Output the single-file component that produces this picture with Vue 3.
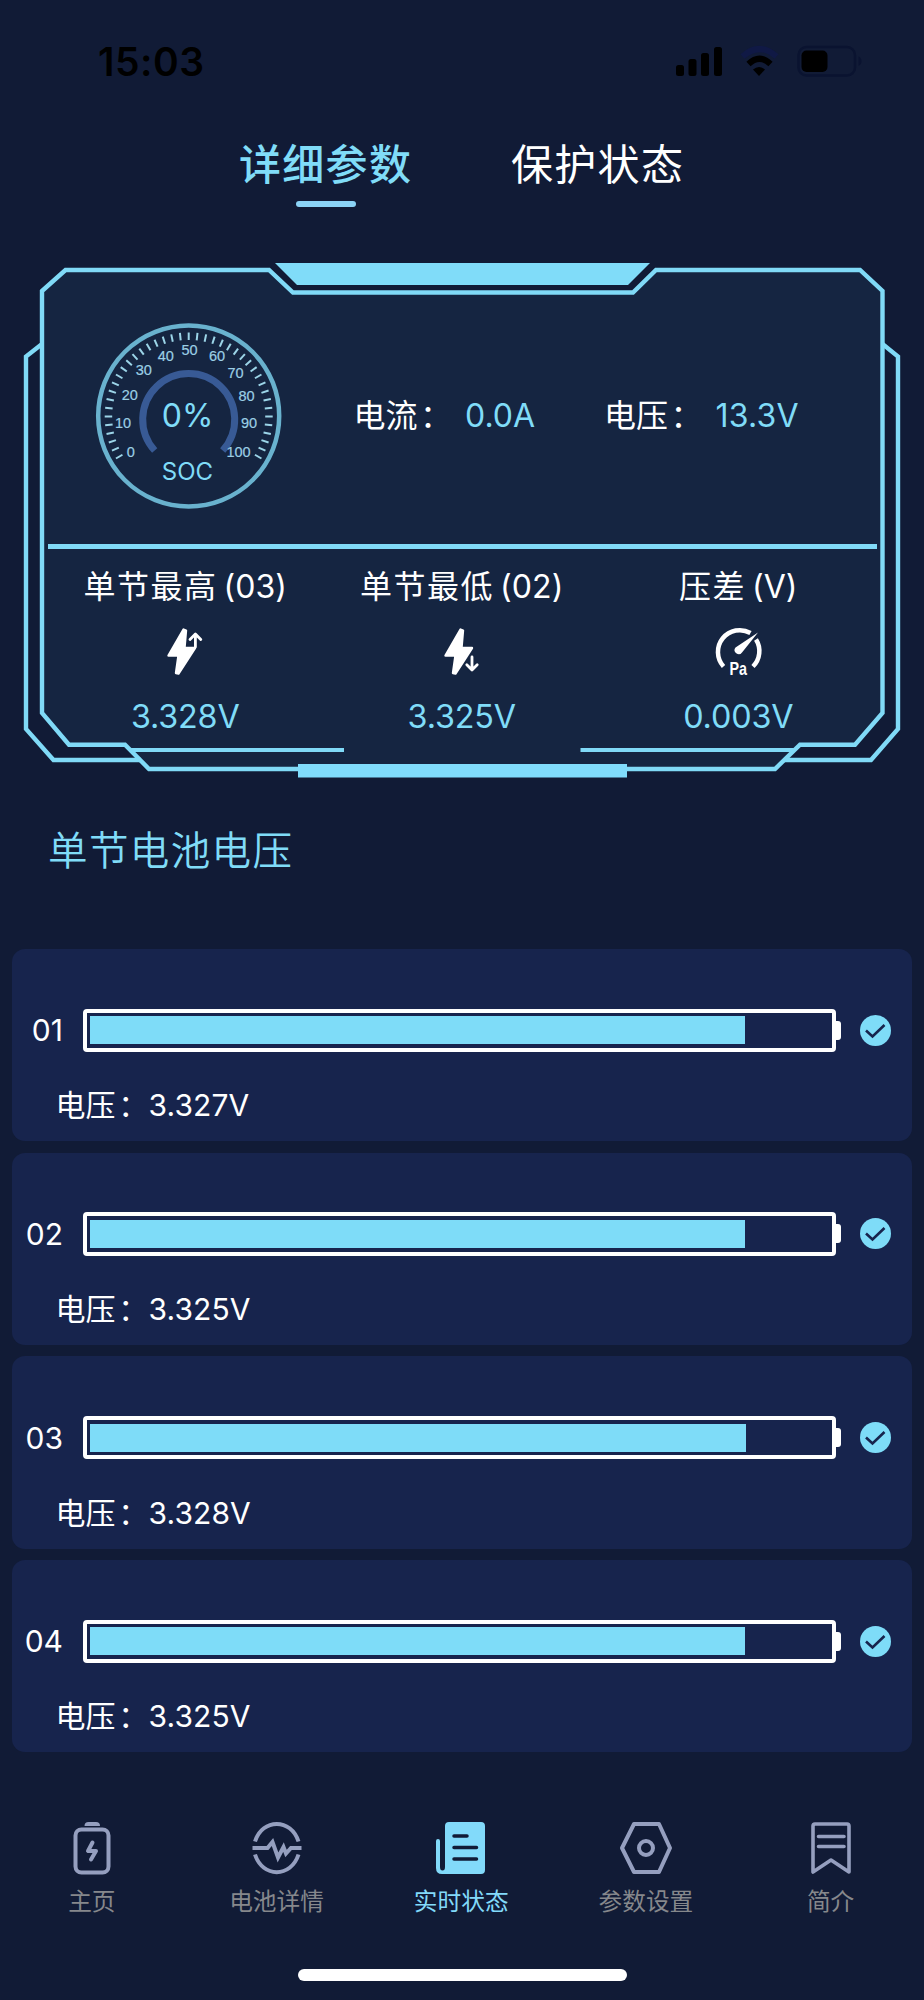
<script setup>
const ticks = Array.from({ length: 41 }, (_, i) => -120 + i * 6)

const scale = [
  { v: 0, x: 130.7, y: 452 },
  { v: 10, x: 123, y: 423 },
  { v: 20, x: 129.7, y: 394.5 },
  { v: 30, x: 143.7, y: 369.7 },
  { v: 40, x: 165.7, y: 355.7 },
  { v: 50, x: 189.5, y: 350 },
  { v: 60, x: 217, y: 356 },
  { v: 70, x: 235.5, y: 373 },
  { v: 80, x: 246.5, y: 396 },
  { v: 90, x: 249, y: 423 },
  { v: 100, x: 238.5, y: 452 }
]

const cells = [
  { id: '01', voltage: '3.327V', level: 88.7 },
  { id: '02', voltage: '3.325V', level: 88.7 },
  { id: '03', voltage: '3.328V', level: 88.8 },
  { id: '04', voltage: '3.325V', level: 88.7 }
]
</script>

<template>
  <div class="page">
    <header class="status">
      <span class="clock">15:03</span>
      <svg class="signals" width="190" height="40" viewBox="672 42 190 40">
        <g fill="#000">
          <rect x="676" y="65" width="8" height="11" rx="2.500" />
          <rect x="688.500" y="59" width="8" height="17" rx="2.500" />
          <rect x="701" y="53" width="8" height="23" rx="2.500" />
          <rect x="714" y="47" width="8" height="29" rx="2.500" />
          <path d="M759 76 L753 69.500 Q759 64.500 765 69.500 Z" />
        </g>
        <path d="M748.500 64 Q759.500 53.500 770.500 64" fill="none" stroke="#000" stroke-width="6" />
        <path d="M742.500 56.500 Q759.500 41.500 776.500 56.500" fill="none" stroke="#101945" stroke-width="6" />
        <rect x="798.500" y="47" width="56.500" height="28.500" rx="8" fill="none" stroke="#0a1330" stroke-width="2.500" />
        <rect x="801.500" y="50.500" width="26" height="21.500" rx="5" fill="#000" />
        <path d="M858.500 56.500 q3 1.500 3 4.700 q0 3.200 -3 4.700 z" fill="#0a1330" />
      </svg>
    </header>

    <nav class="tabs">
      <div class="tab active">详细参数</div>
      <div class="tab">保护状态</div>
    </nav>

    <section class="panel">
      <svg class="frame" width="924" height="530" viewBox="0 255 924 530">
        <path d="M42 291 L65.500 270 H269 L293 292.500 H633 L656 270 H860 L882.500 291 V713 L855 744.700 H800 L775 769 H149 L125 744.700 H69 L42 713 Z" fill="#152541" />
        <g fill="none" stroke="#80daf7" stroke-width="4.400">
          <path d="M42 291 L65.500 270 H269 L293 292.500 H633 L656 270 H860 L882.500 291 V713 L855 744.700 H800 L775 769 H149 L125 744.700 H69 L42 713 Z" />
          <path d="M42 344 L26 356.500 V729 L53.500 760 H141" />
          <path d="M882.500 344 L898 356.500 V729 L871 760 H784" />
          <path d="M131 750 H344 M580.500 750 H794" stroke-width="4" />
        </g>
        <path d="M275 263 H650 L628 285 H297 Z" fill="#80dcf9" />
        <rect x="298" y="764" width="329" height="13.500" fill="#80dcfc" />
        <rect x="48" y="544" width="829" height="5" fill="#80daf7" />

        <circle cx="188.700" cy="416" r="90.500" fill="none" stroke="#69b2ce" stroke-width="4.500" />
        <g stroke="#9cd5e8" stroke-width="2">
          <line v-for="a in ticks" :key="a" x1="188.700" x2="188.700" y1="332.500" y2="340" :transform="`rotate(${a} 188.7 416.500)`" />
        </g>
        <path d="M154.700 450.500 A46 46 0 1 1 222.700 450.500" fill="none" stroke="#385a95" stroke-width="7" />
        <g class="scale">
          <text v-for="s in scale" :key="s.v" :x="s.x" :y="s.y + 5">{{ s.v }}</text>
        </g>
        <text class="soc-value" x="187.500" y="427">0%</text>
        <text class="soc-name" x="187.500" y="480">SOC</text>
      </svg>

      <div class="readings">
        <span class="label current">电流<i>：</i></span><span class="value amp">0.0A</span>
        <span class="label total">电压<i>：</i></span><span class="value volt">13.3V</span>
      </div>

      <div class="stats">
        <div class="stat">
          <div class="stat-name">单节最高<span>(03)</span></div>
          <svg width="52" height="52" viewBox="0 0 52 52">
            <path d="M24.500 3.500 L27 4.500 L25.500 22 H36 L19.500 47.500 L17 47 L19.500 29.500 H9.500 Z" fill="#fff" stroke="#fff" stroke-width="2.400" stroke-linejoin="round" />
            <path d="M36.400 21 V9 M31 13.500 L36.400 8 L41.800 13.500" fill="none" stroke="#fff" stroke-width="2.800" stroke-linecap="round" stroke-linejoin="round" />
          </svg>
          <div class="stat-value">3.328V</div>
        </div>
        <div class="stat">
          <div class="stat-name">单节最低<span>(02)</span></div>
          <svg width="52" height="52" viewBox="0 0 52 52">
            <path d="M24.500 3.500 L27 4.500 L25.500 22 H36 L19.500 47.500 L17 47 L19.500 29.500 H9.500 Z" fill="#fff" stroke="#fff" stroke-width="2.400" stroke-linejoin="round" />
            <path d="M36 31 V44 M30.800 38.800 L36 44 L41.200 38.800" fill="none" stroke="#152541" stroke-width="6" />
            <path d="M36 31 V44 M30.800 38.800 L36 44 L41.200 38.800" fill="none" stroke="#fff" stroke-width="2.800" stroke-linecap="round" stroke-linejoin="round" />
          </svg>
          <div class="stat-value">3.325V</div>
        </div>
        <div class="stat">
          <div class="stat-name">压差<span>(V)</span></div>
          <svg width="52" height="52" viewBox="0 0 52 52">
            <path d="M11.500 40.500 A21.800 21.800 0 0 1 38.500 7 M44 13.500 A21.800 21.800 0 0 1 41 40.500" fill="none" stroke="#fff" stroke-width="4.500" />
            <path d="M46 6.500 L30 26.500 A4 4 0 1 1 23.500 21.500 Z" fill="#fff" />
            <text class="pa" x="26.300" y="48.500" textLength="17.500" lengthAdjust="spacingAndGlyphs">Pa</text>
          </svg>
          <div class="stat-value">0.003V</div>
        </div>
      </div>
    </section>

    <h2 class="title">单节电池电压</h2>

    <main class="cells">
      <article v-for="c in cells" :key="c.id" class="cell">
        <div class="row">
          <span class="id">{{ c.id }}</span>
          <div class="battery"><div class="fill" :style="{ width: c.level + '%' }"></div></div>
          <i class="nub"></i>
          <svg class="check" width="31" height="31" viewBox="0 0 31 31">
            <circle cx="15.500" cy="15.500" r="15.500" fill="#7edcf8" />
            <path d="M6 15.500 L12.500 21.500 L24.500 10" fill="none" stroke="#17244d" stroke-width="2.600" />
          </svg>
        </div>
        <div class="detail"><span class="dlabel">电压<i>：</i></span><span>{{ c.voltage }}</span></div>
      </article>
    </main>

    <footer class="bar">
      <div class="item">
        <svg width="54" height="54" viewBox="0 0 54 54" fill="none" stroke="#959fbf" stroke-width="4">
          <path d="M19.500 5 q0 -4 4 -4 h7.500 q4 0 4 4 z" fill="#959fbf" stroke="none" />
          <rect x="10.500" y="8.500" width="33" height="43" rx="6" />
          <path d="M27.500 21.500 L23 30 H31 L26 38.500" stroke-linecap="round" stroke-linejoin="round" />
        </svg>
        <span>主页</span>
      </div>
      <div class="item">
        <svg width="54" height="54" viewBox="0 0 54 54" fill="none" stroke="#959fbf" stroke-width="4">
          <path d="M5 20.500 C12.500 -3 41 -3 48.500 20.500 M5 33.500 C12.500 57 41 57 48.500 33.500" />
          <path d="M2.500 27 H17.500 L22.500 21 L28 36.500 L33.500 26 L36 32.500 L41 27 H51.500" />
        </svg>
        <span>电池详情</span>
      </div>
      <div class="item on">
        <svg width="54" height="54" viewBox="0 0 54 54">
          <path d="M15 1 H47 Q51 1 51 5 V49 Q51 53 47 53 H8 Q2 53 2 47 V20 Q2 18 4 18 Q6 18 6 20 V46 Q6 49.500 8.500 49.500 Q11 49.500 11 46 V5 Q11 1 15 1 Z" fill="#82dafa" />
          <path d="M20 15 H33 M20 26.500 H42.500 M20 38 H42.500" fill="none" stroke="#111b36" stroke-width="3.500" stroke-linecap="round" />
        </svg>
        <span>实时状态</span>
      </div>
      <div class="item">
        <svg width="54" height="54" viewBox="0 0 54 54" fill="none" stroke="#959fbf" stroke-width="4" stroke-linejoin="round">
          <path d="M15 3 H40 L51 27 L40 51 H15 L3 27 Z" />
          <circle cx="27" cy="27" r="7" />
        </svg>
        <span>参数设置</span>
      </div>
      <div class="item">
        <svg width="54" height="54" viewBox="0 0 54 54" fill="none" stroke="#959fbf" stroke-width="3.600" stroke-linejoin="round" stroke-linecap="round">
          <path d="M9 5 Q9 3 11 3 H43 Q45 3 45 5 V51 L27 39 L9 51 Z" />
          <path d="M14.500 15.500 H40 M14.500 25.500 H40" />
        </svg>
        <span>简介</span>
      </div>
    </footer>
    <div class="home"></div>
  </div>
</template>

<style>
body {
  background: #111b36;
}
</style>

<style scoped>
.page {
  width: 924px;
  height: 2000px;
  box-sizing: border-box;
  overflow: hidden;
  background: #111b36;
  color: #fff;
  font-family: Inter, "Noto Sans CJK SC", sans-serif;
  display: flex;
  flex-direction: column;
}
.status {
  height: 124px;
  flex: none;
  display: flex;
  justify-content: space-between;
  align-items: center;
  padding: 0 62px 0 98px;
  color: #000;
  box-sizing: border-box;
}
.clock {
  font-size: 39px;
  font-weight: 600;
  line-height: 40px;
  letter-spacing: 0.500px;
}
.tabs {
  height: 131px;
  flex: none;
  display: flex;
  gap: 98px;
  padding-left: 239px;
}
.tab {
  width: 174px;
  height: 83px;
  font-size: 42px;
  line-height: 82px;
  letter-spacing: 1.300px;
  white-space: nowrap;
}
.tab.active {
  color: #80dcf8;
  font-weight: 500;
}
.tab.active::after {
  content: "";
  display: block;
  width: 60px;
  height: 6px;
  margin: -5px 0 0 57px;
  border-radius: 3px;
  background: #8bd3f6;
}
.panel {
  position: relative;
  height: 530px;
  flex: none;
}
.frame {
  position: absolute;
  inset: 0;
}
.scale text {
  font-family: "Liberation Sans", sans-serif;
  font-size: 14.500px;
  fill: #9bcfe5;
  stroke: #9bcfe5;
  stroke-width: 0.200;
  text-anchor: middle;
}
.soc-value {
  font-size: 32px;
  fill: #80dcf8;
  text-anchor: middle;
}
.soc-name {
  font-size: 24px;
  fill: #80dcf8;
  text-anchor: middle;
}
.readings {
  position: relative;
  height: 289px;
  box-sizing: border-box;
  padding: 136px 0 0 353.500px;
  display: flex;
  font-size: 32px;
  line-height: 50px;
  white-space: nowrap;
}
.label i,
.dlabel i {
  font-style: normal;
  margin-left: 2.500px;
}
.current,
.total {
  width: 111.500px;
}
.amp {
  width: 139px;
}
.value {
  color: #80dcf8;
}
.volt {
  letter-spacing: 0.200px;
}
.stats {
  position: relative;
  display: grid;
  grid-template-columns: repeat(3, 276.500px);
  padding: 19px 0 0 47px;
}
.stat {
  display: flex;
  flex-direction: column;
  align-items: center;
  white-space: nowrap;
}
.stat-name {
  font-size: 32px;
  line-height: 48px;
  letter-spacing: 1.500px;
}
.stat-name span {
  margin-left: 6px;
  letter-spacing: 0.100px;
}
.stat svg {
  margin-top: 15px;
}
.pa {
  font-family: "Liberation Sans", sans-serif;
  font-size: 19px;
  font-weight: 700;
  fill: #fff;
  text-anchor: middle;
}
.stat-value {
  margin-top: 15px;
  font-size: 32.300px;
  line-height: 48px;
  letter-spacing: -0.150px;
  color: #80dcf8;
}
.title {
  margin: 0;
  height: 164px;
  flex: none;
  box-sizing: border-box;
  padding: 36px 0 0 48px;
  font-size: 39.500px;
  font-weight: 350;
  line-height: 60px;
  letter-spacing: 1.400px;
  color: #80dcf8;
}
.cells {
  display: flex;
  flex-direction: column;
  gap: 11.300px;
  padding: 0 12px;
  flex: none;
}
.cell {
  height: 192.400px;
  border-radius: 13px;
  background: #17244d;
}
.row {
  display: flex;
  align-items: center;
  padding-top: 59.500px;
  height: 43.400px;
}
.id {
  width: 51px;
  text-align: right;
  font-size: 30px;
  line-height: 43px;
  padding-top: 1px;
}
.battery {
  width: 753px;
  height: 43.400px;
  margin-left: 20px;
  box-sizing: border-box;
  padding: 3.700px 3px;
  border: 4px solid #fff;
  border-radius: 4px;
}
.fill {
  height: 100%;
  background: #7edcf8;
}
.nub {
  width: 5px;
  height: 19px;
  background: #fff;
  border-radius: 0 3px 3px 0;
}
.check {
  margin-left: 19px;
}
.detail {
  display: flex;
  padding: 31.500px 0 0 43.500px;
  font-size: 30px;
  line-height: 44px;
  letter-spacing: 0.100px;
}
.dlabel {
  width: 93px;
}
.bar {
  margin-top: 69px;
  height: 148px;
  flex: none;
  display: grid;
  grid-template-columns: repeat(5, 184.700px);
  padding-right: 1px;
  margin-left: -0.500px;
}
.item {
  display: flex;
  flex-direction: column;
  align-items: center;
  font-size: 23.700px;
  line-height: 34px;
  color: #86888c;
}
.item span {
  margin-top: 10px;
}
.item.on {
  color: #82dafa;
}
.home {
  width: 329px;
  height: 12px;
  flex: none;
  margin-left: 298px;
  border-radius: 6px;
  background: #fff;
}
</style>
